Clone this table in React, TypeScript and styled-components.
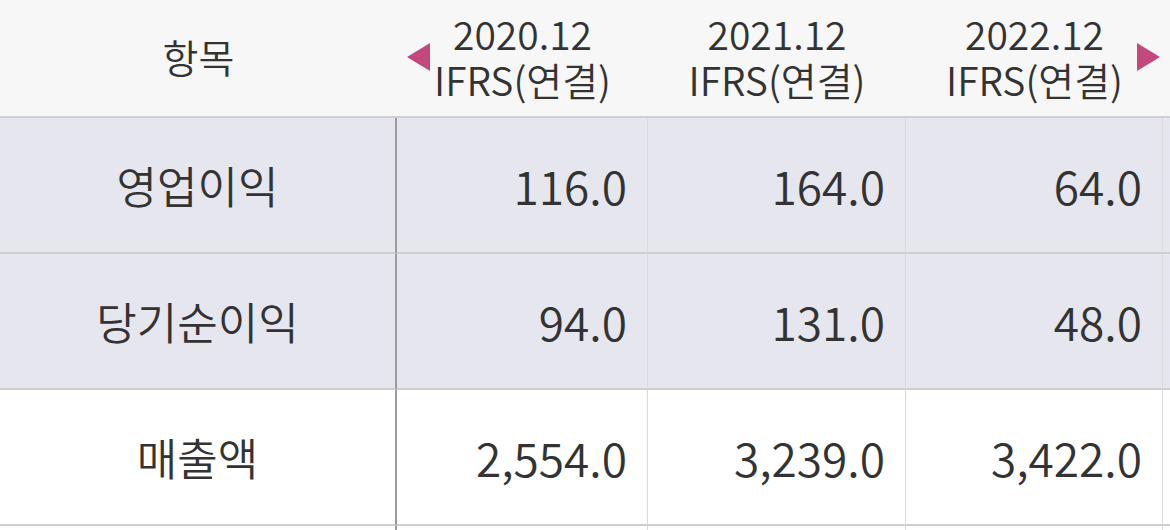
import { createGlobalStyle, styled } from "styled-components";

const GlobalStyle = createGlobalStyle`
    html, body {
        margin: 0;
        padding: 0;
        background: #ffffff;
    }
    body {
        font-family: "Noto Sans CJK KR", "Noto Sans", sans-serif;
        font-weight: 350;
        color: #333333;
    }
`;

const Frame = styled.div`
    width: 1170px;
    height: 530px;
    overflow: hidden;
    background: #ffffff;
`;

const Sheet = styled.div`
    display: grid;
    grid-template-columns: 397px 251px 258px 257px 257px;
    grid-template-rows: 118px 136px 136px 136px 60px;
    width: max-content;
`;

const HeadCell = styled.div`
    position: relative;
    display: flex;
    flex-direction: column;
    align-items: center;
    justify-content: center;
    padding-bottom: 4px;
    background: #f7f7f7;
    border-bottom: 2px solid #cfcfd4;
    font-size: 39px;
    line-height: 46px;
    color: #333333;
`;

const HeadLine = styled.span`
    display: block;
    height: 46px;
    white-space: nowrap;
`;

const BodyCell = styled.div<{ $shade?: boolean; $first?: boolean; $align: "center" | "right" }>`
    display: flex;
    align-items: center;
    justify-content: ${(p) => (p.$align === "right" ? "flex-end" : "center")};
    padding-right: ${(p) => (p.$align === "right" ? "20px" : "0")};
    background: ${(p) => (p.$shade ? "#e6e6ef" : "#ffffff")};
    border-bottom: 2px solid #cdcdd2;
    border-right: ${(p) => (p.$first ? "2px solid #9a9a9e" : "1px solid #dadade")};
    font-size: ${(p) => (p.$align === "right" ? "46px" : "44px")};
    color: #333333;
    white-space: nowrap;
`;

const Arrow = styled.span<{ $dir: "left" | "right" }>`
    position: absolute;
    top: 43px;
    ${(p) => (p.$dir === "left" ? "left: 10px;" : "right: 3px;")}
    width: 0;
    height: 0;
    border-top: 14px solid transparent;
    border-bottom: 14px solid transparent;
    ${(p) =>
        p.$dir === "left"
            ? "border-right: 23px solid #c2487e;"
            : "border-left: 23px solid #c2487e;"}
`;

const periods = ["2020.12", "2021.12", "2022.12"];

const rows = [
    { label: "영업이익", values: ["116.0", "164.0", "64.0"], shade: true },
    { label: "당기순이익", values: ["94.0", "131.0", "48.0"], shade: true },
    { label: "매출액", values: ["2,554.0", "3,239.0", "3,422.0"], shade: false },
    { label: "", values: ["", "", ""], shade: false },
];

const App = () => {
    return (
        <Frame>
            <GlobalStyle />
            <Sheet>
                <HeadCell>
                    <HeadLine>항목</HeadLine>
                </HeadCell>
                {periods.map((p, i) => (
                    <HeadCell key={p}>
                        {i === 0 && <Arrow $dir="left" />}
                        <HeadLine>{p}</HeadLine>
                        <HeadLine>IFRS(연결)</HeadLine>
                        {i === 2 && <Arrow $dir="right" />}
                    </HeadCell>
                ))}
                {/* next period column, scrolled off to the right */}
                <HeadCell />
                {rows.map((r, ri) => [
                    <BodyCell key={`l${ri}`} $shade={r.shade} $first $align="center">
                        {r.label}
                    </BodyCell>,
                    ...r.values.map((v, vi) => (
                        <BodyCell key={`v${ri}-${vi}`} $shade={r.shade} $align="right">
                            {v}
                        </BodyCell>
                    )),
                    <BodyCell key={`x${ri}`} $shade={r.shade} $align="right" />,
                ])}
            </Sheet>
        </Frame>
    );
};

export default App;
